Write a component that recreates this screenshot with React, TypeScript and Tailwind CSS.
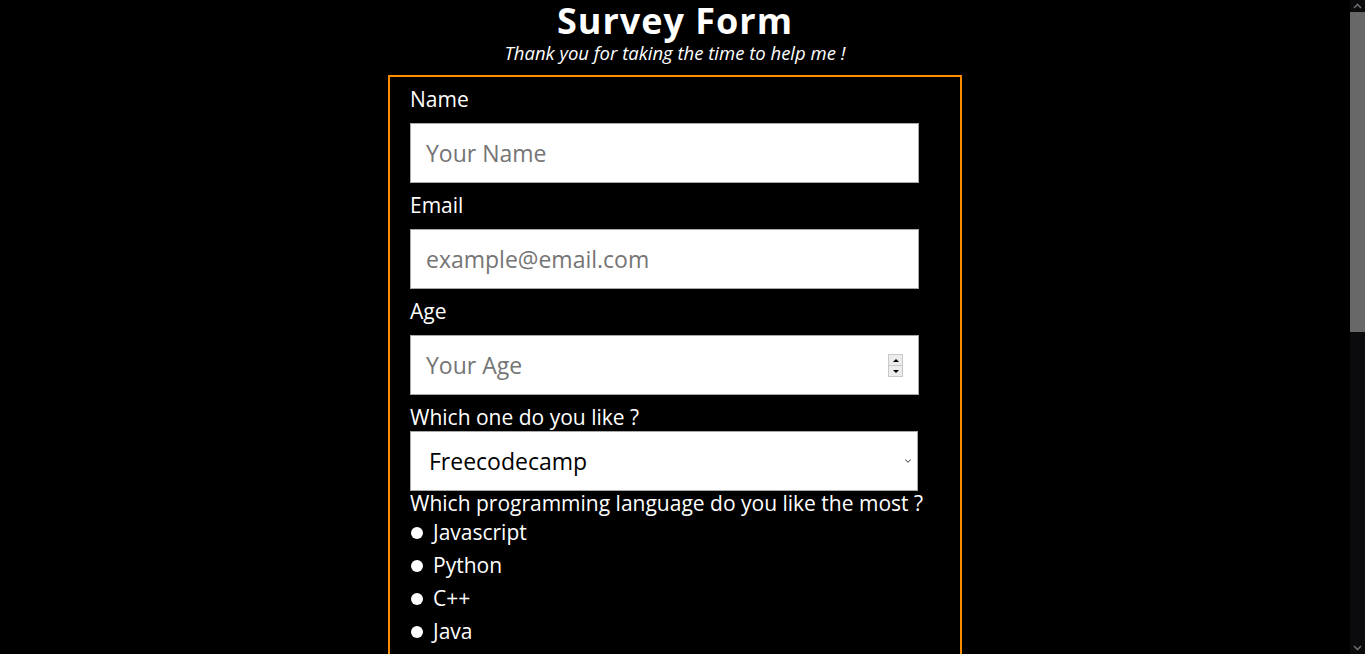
import { ChevronDown } from "lucide-react";

const font = { fontFamily: '"Open Sans", "Liberation Sans", sans-serif' };

function Field({ label, placeholder, spinner }: { label: string; placeholder: string; spinner?: boolean }) {
  return (
    <div className="mb-[10px]">
      <div className="text-[21px] leading-[24px] text-white mb-[12px]">{label}</div>
      <div className="relative w-[509px] h-[60px] bg-white border border-[#a9a9a9] flex items-center pl-[15px]">
        <span className="text-[23px] text-[#757575]">{placeholder}</span>
        {spinner && (
          <div className="absolute right-[15px] top-[18px] w-[15px] h-[23px] flex flex-col border border-[#c8c8c8] bg-[#ececec]">
            <div className="flex-1 flex items-center justify-center border-b border-[#c8c8c8]">
              <div className="w-0 h-0 border-l-[3px] border-r-[3px] border-b-[3px] border-l-transparent border-r-transparent border-b-black" />
            </div>
            <div className="flex-1 flex items-center justify-center">
              <div className="w-0 h-0 border-l-[3px] border-r-[3px] border-t-[3px] border-l-transparent border-r-transparent border-t-black" />
            </div>
          </div>
        )}
      </div>
    </div>
  );
}

function Radio({ label }: { label: string }) {
  return (
    <div className="flex items-center h-[33px]">
      <div className="w-[12px] h-[12px] rounded-full bg-white ml-[1px] mr-[10px]" />
      <span className="text-[21px] text-white">{label}</span>
    </div>
  );
}

function Check({ label }: { label: string }) {
  return (
    <div className="flex items-center h-[33px]">
      <div className="w-[13px] h-[13px] rounded-[2px] bg-white ml-[1px] mr-[10px]" />
      <span className="text-[21px] text-white">{label}</span>
    </div>
  );
}

function Scrollbar() {
  return (
    <div className="w-[15px] h-full bg-[#0b0b0d] flex flex-col items-center shrink-0">
      <div className="h-[12px] flex items-center justify-center text-[#6b6b6b]">
        <svg width="9" height="6" viewBox="0 0 9 6"><path d="M1 5 L4.5 1.5 L8 5" fill="none" stroke="currentColor" strokeWidth="1.6" /></svg>
      </div>
      <div className="w-[15px] h-[320px] bg-[#686868]" />
      <div className="flex-1" />
      <div className="h-[12px] flex items-center justify-center text-[#6b6b6b]">
        <svg width="9" height="6" viewBox="0 0 9 6"><path d="M1 1 L4.5 4.5 L8 1" fill="none" stroke="currentColor" strokeWidth="1.6" /></svg>
      </div>
    </div>
  );
}

export default function App() {
  return (
    <div className="h-screen flex bg-black text-white overflow-hidden" style={font}>
      <div className="flex-1 overflow-hidden">
        <header className="text-center">
          <h1 className="text-[36px] leading-[42px] font-bold tracking-[1px]">Survey Form</h1>
          <p className="text-[18.5px] leading-[22px] italic">Thank you for taking the time to help me !</p>
        </header>

        <form className="w-[574px] mx-auto mt-[11px] border-2 border-[#ff8c00] pt-[10px] pl-[20px] pb-[30px]">
          <Field label="Name" placeholder="Your Name" />
          <Field label="Email" placeholder="example@email.com" />
          <Field label="Age" placeholder="Your Age" spinner />

          <div className="text-[21px] leading-[24px] mb-[2px]">Which one do you like ?</div>
          <div className="w-[508px] h-[60px] bg-white border border-[#a9a9a9] flex items-center justify-between pl-[18px] pr-[4px]">
            <span className="text-[23px] text-black">Freecodecamp</span>
            <ChevronDown className="w-[10px] h-[10px] text-[#555]" strokeWidth={2.5} />
          </div>

          <div className="text-[21px] leading-[24px]">Which programming language do you like the most ?</div>
          <div className="mt-[1px]">
            <Radio label="Javascript" />
            <Radio label="Python" />
            <Radio label="C++" />
            <Radio label="Java" />
            <Radio label="Other" />
          </div>

          <div className="text-[21px] leading-[24px] mt-[12px]">What would you like to see improved ?</div>
          <div className="mt-[4px]">
            <Check label="Front-end Projects" />
            <Check label="Back-end Projects" />
            <Check label="Data Visualization" />
            <Check label="Challenges" />
            <Check label="Open Source Community" />
          </div>

          <div className="text-[21px] leading-[24px] mt-[12px] mb-[12px]">Any comments or suggestions ?</div>
          <div className="w-[509px] h-[140px] bg-white border border-[#a9a9a9] p-[15px]">
            <span className="text-[23px] text-[#757575]">Enter your comment here...</span>
          </div>

          <button type="button" className="mt-[20px] w-[509px] h-[54px] bg-[#ff8c00] text-black text-[22px] font-bold">
            Submit
          </button>
        </form>
      </div>
      <Scrollbar />
    </div>
  );
}
